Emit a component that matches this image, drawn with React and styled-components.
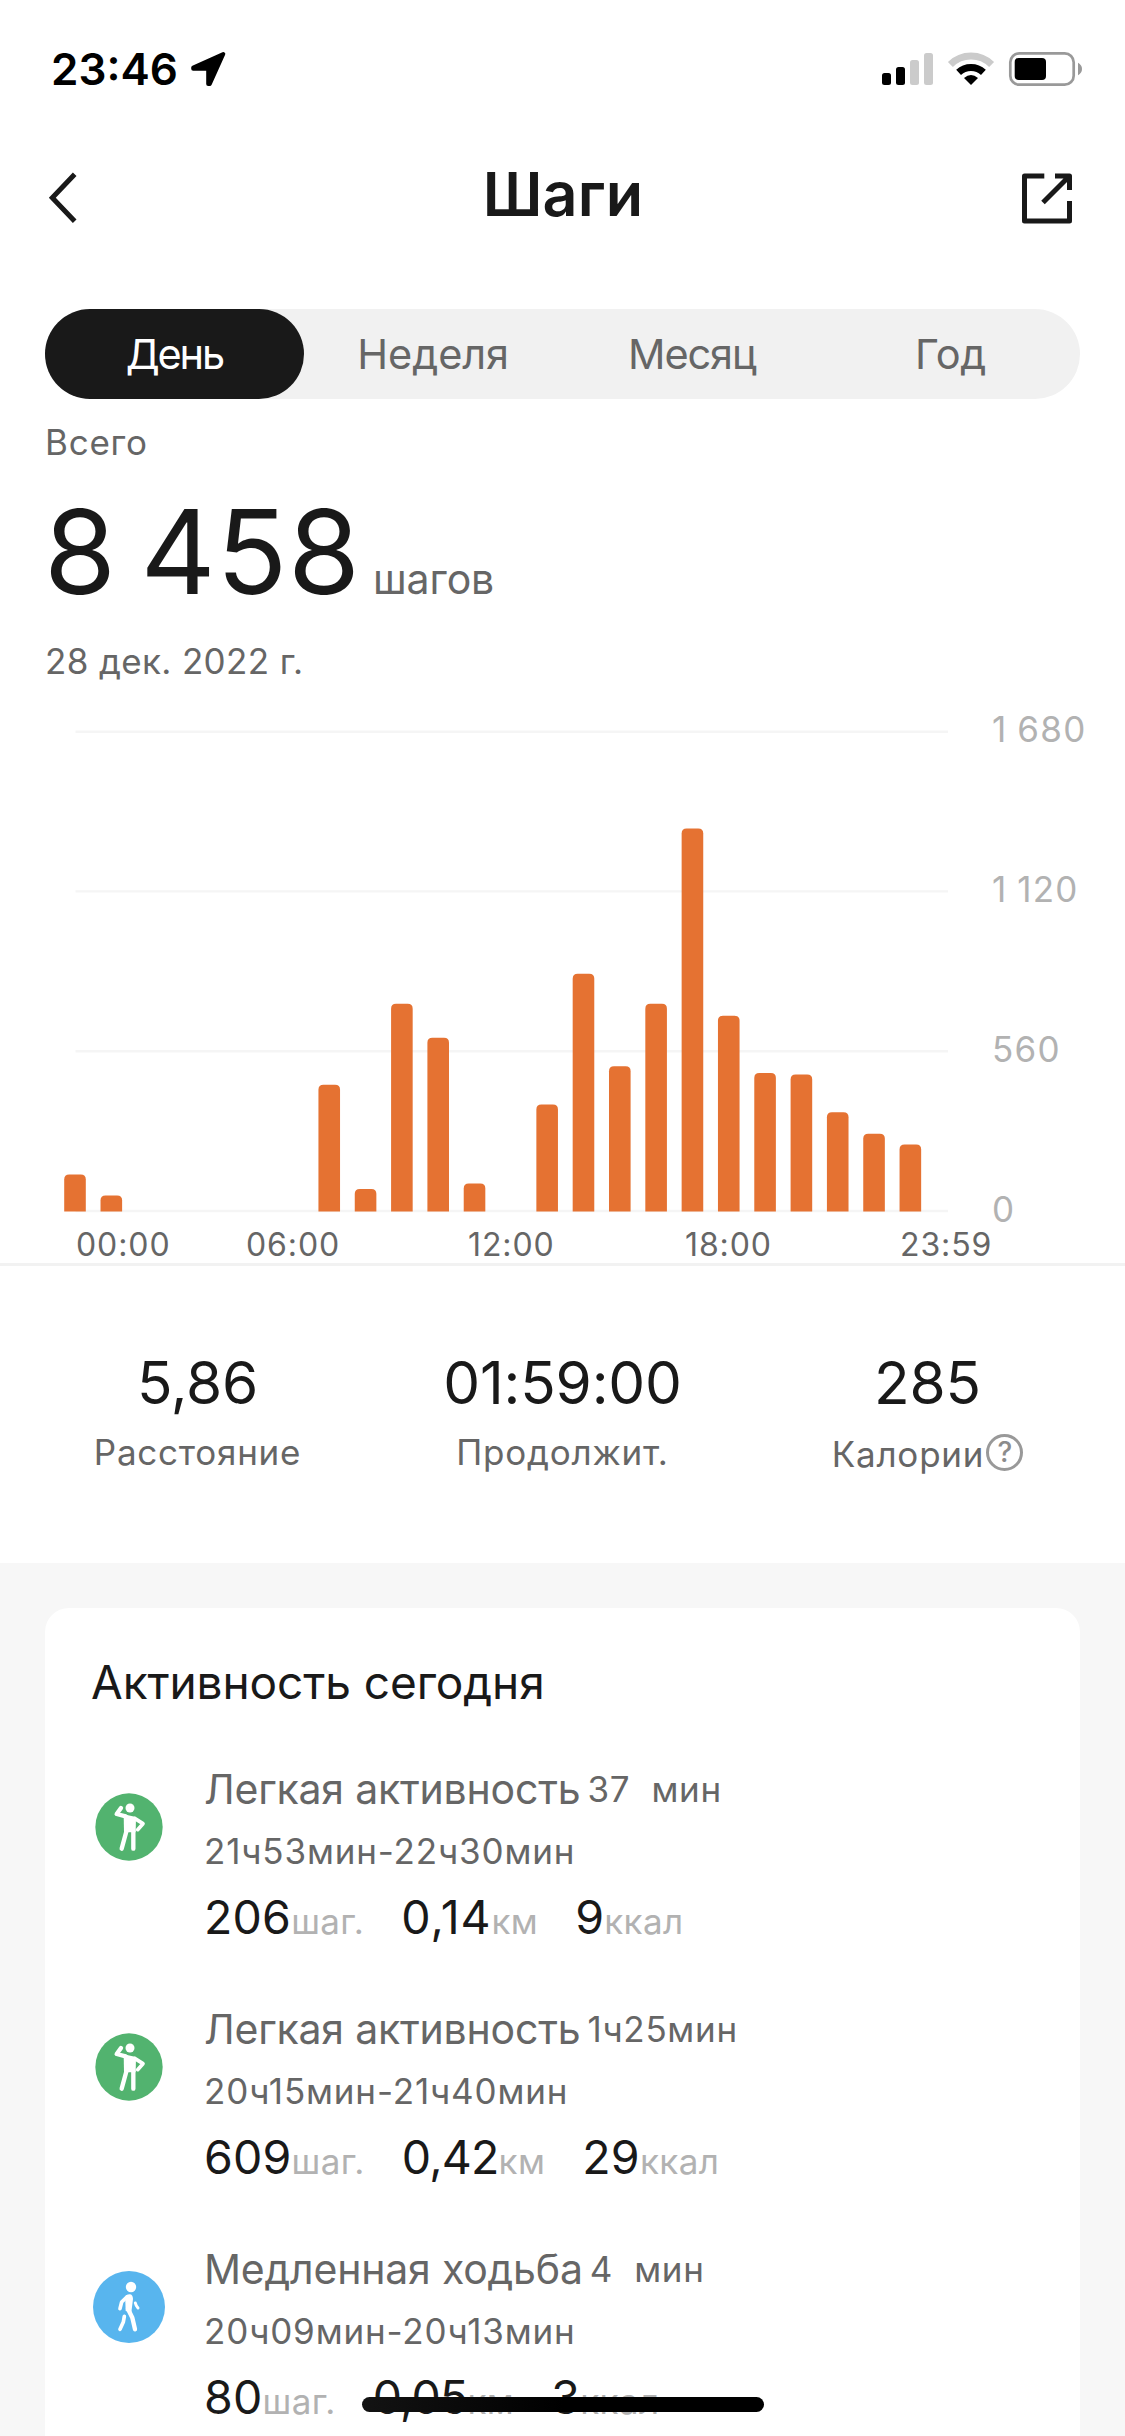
import React, {useState} from 'react';
import styled, {createGlobalStyle} from 'styled-components';

const palette = {
    ink: '#191919',
    grey: '#666666',
    light: '#b2b2b2',
    line: '#f2f2f2',
    grid: '#f5f5f5',
    pill: '#f1f1f1',
    page: '#f7f7f7',
    orange: '#e57232',
    green: '#52b36f',
    blue: '#58b5ee',
};

const GlobalStyle = createGlobalStyle`
    body {
        margin: 0;
        background: ${palette.page};
        font-family: Inter, "Liberation Sans", sans-serif;
        color: ${palette.ink};
    }
    * {
        box-sizing: border-box;
    }
`;

const Screen = styled.div`
    position: relative;
    display: flex;
    flex-direction: column;
    width: 1125px;
    height: 2436px;
    overflow: hidden;
    white-space: pre;
`;

const Panel = styled.section`
    background: #ffffff;
`;

const StatusBar = styled.div`
    display: flex;
    align-items: center;
    justify-content: space-between;
    height: 132px;
    padding: 6px 41px 0 51px;
    color: #000000;
`;

const Clock = styled.div`
    display: flex;
    align-items: center;
    gap: 12px;
    font-size: 44px;
    font-weight: 600;
    line-height: 54px;
`;

const NavBar = styled.header`
    display: flex;
    align-items: center;
    justify-content: space-between;
    height: 132px;
    padding: 0 51px 0 47px;
`;

const Title = styled.h1`
    margin: 0 0 8px 29px;
    font-size: 61px;
    font-weight: 600;
    line-height: 74px;
    letter-spacing: 0.1px;
`;

const IconButton = styled.button`
    display: flex;
    padding: 0;
    border: 0;
    background: none;
    color: ${palette.ink};
`;

const Tabs = styled.nav`
    display: grid;
    grid-template-columns: repeat(4, 1fr);
    height: 90px;
    margin: 45px 45px 0;
    border-radius: 45px;
    background: ${palette.pill};
`;

const Tab = styled.button`
    padding: 0;
    border: 0;
    border-radius: 45px;
    font: inherit;
    font-size: 41.5px;
    letter-spacing: ${({tracking}) => tracking || 0}px;
    background: ${({active}) => (active ? palette.ink : 'none')};
    color: ${({active}) => (active ? '#ffffff' : palette.grey)};
`;

const Summary = styled.div`
    padding: 20px 45px 0;
`;

const Caption = styled.div`
    font-size: 35px;
    line-height: 46px;
    letter-spacing: ${({tracking}) => tracking || 0.75}px;
    color: ${palette.grey};
`;

const Total = styled.div`
    display: flex;
    align-items: baseline;
    gap: 12px;
    height: 140px;
    margin: 17px 0 16px -1px;
    font-size: 116.5px;
    line-height: 140px;
    letter-spacing: 0.8px;
    word-spacing: -10px;
`;

const TotalUnit = styled.span`
    font-size: 41px;
    letter-spacing: -0.1px;
    color: ${palette.grey};
`;

const Chart = styled.div`
    display: flex;
    padding: 25px 0 0 60px;
`;

const Scale = styled.div`
    display: flex;
    flex-direction: column;
    justify-content: space-between;
    height: 520px;
    font-size: 35px;
    line-height: 40px;
    letter-spacing: 1.3px;
    word-spacing: -1.5px;
    color: ${palette.light};
`;

const Hours = styled.div`
    display: grid;
    grid-template-columns: 170px 222px 217px 215px auto;
    height: 34px;
    padding-left: 76px;
    font-size: 32px;
    line-height: 31px;
    letter-spacing: 0.9px;
    color: ${palette.grey};
`;

const Stats = styled.div`
    display: grid;
    grid-template-columns: repeat(3, 365px);
    justify-content: center;
    height: 300px;
    padding-top: 82px;
    border-top: 3px solid ${palette.line};
`;

const Stat = styled.div`
    display: flex;
    flex-direction: column;
    align-items: center;
    gap: 11px;
`;

const StatValue = styled.div`
    font-size: 58.5px;
    line-height: 70px;
    letter-spacing: -0.2px;
`;

const StatLabel = styled.div`
    display: flex;
    align-items: center;
    gap: 2px;
    padding-top: ${({hint}) => (hint ? 2 : 0)}px;
`;

const Help = styled.span`
    width: 37px;
    height: 37px;
    margin-bottom: 3px;
    border: 3px solid #999999;
    border-radius: 50%;
    font-size: 28px;
    font-weight: 500;
    line-height: 31px;
    text-align: center;
    color: #8c8c8c;
`;

const Feed = styled.section`
    flex: 1;
    padding: 45px 45px 0;
    background: ${palette.page};
`;

const Card = styled.div`
    height: 900px;
    padding: 44px 46px 0;
    border-radius: 24px;
    background: #ffffff;
`;

const CardTitle = styled.h2`
    margin: 0 0 52px;
    font-size: 46px;
    font-weight: 400;
    line-height: 60px;
    letter-spacing: -0.1px;
`;

const Activities = styled.div`
    display: flex;
    flex-direction: column;
    gap: 57px;
`;

const Activity = styled.div`
    display: flex;
    gap: 39px;
    height: 183px;
    padding-left: 2px;
`;

const Badge = styled.svg`
    flex: none;
    width: 72px;
    height: 72px;
    margin-top: 27px;
`;

const ActivityName = styled.div`
    display: flex;
    align-items: center;
    gap: 7px;
    height: 50px;
    margin-bottom: 14px;
    font-size: 41px;
    letter-spacing: -0.2px;
    color: ${palette.grey};
`;

const Metrics = styled.div`
    display: flex;
    gap: 37px;
    margin-top: 13px;
    line-height: 60px;
`;

const Metric = styled.div`
    font-size: 46.5px;
    letter-spacing: ${({tracking}) => tracking || 0.2}px;
`;

const Unit = styled.span`
    font-size: 35px;
    letter-spacing: 0.4px;
    color: ${palette.light};
`;

const HomeIndicator = styled.div`
    position: absolute;
    left: 362px;
    bottom: 24px;
    width: 402px;
    height: 15px;
    border-radius: 8px;
    background: linear-gradient(90deg, #131313, #000000 50%);
`;

const LocationArrow = () => (
    <svg width="36" height="36" viewBox="190 52 36 36" fill="currentColor" stroke="currentColor" strokeWidth="4" strokeLinejoin="round">
        <path d="M223.3 55 193.2 68.6V69.8H208.2V84.9H209.8Z"/>
    </svg>
);

const StatusIcons = () => (
    <svg width="204" height="38" viewBox="880 50 204 38">
        <rect x="882" y="73" width="9" height="12" rx="2.5"/>
        <rect x="896" y="67" width="9" height="18" rx="2.5"/>
        <rect x="910" y="60" width="9" height="25" rx="2.5" fill="#cbcbcb"/>
        <rect x="924" y="53" width="9" height="32" rx="2.5" fill="#cbcbcb"/>
        <g fill="none" strokeWidth="7">
            <path d="M950.4 64.4A29.2 29.2 0 0 1 991.6 64.4" stroke="#cbcbcb"/>
            <path d="M958.6 72.4A18 18 0 0 1 983.4 72.4" stroke="#000"/>
        </g>
        <path d="M971 85 964 78Q971 72 978 78Z"/>
        <rect x="1010.3" y="53.3" width="63.4" height="31.4" rx="9" fill="none" stroke="#999" strokeWidth="2.7"/>
        <rect x="1014.7" y="58" width="31.3" height="22" rx="4"/>
        <path d="M1078 62.8Q1082 65 1082 69T1078 75.2Z" fill="#999"/>
    </svg>
);

const BackIcon = () => (
    <svg width="30" height="54" viewBox="47 171 30 54" fill="none" stroke="currentColor" strokeWidth="5">
        <path d="M74.7 174.3 52.3 197.8 74.7 221.3"/>
    </svg>
);

const ShareIcon = () => (
    <svg width="54" height="54" viewBox="1020 171 54 54" fill="none" stroke="currentColor" strokeWidth="5" strokeLinejoin="round">
        <path d="M1044.3 176H1024.5V221H1069.5V201M1055 176H1069.5V190M1043 202.5 1069 176.5"/>
    </svg>
);

const StandingBadge = () => (
    <Badge viewBox="0 0 216 216">
        <circle cx="108" cy="108" r="101" fill={palette.green}/>
        <circle cx="111" cy="51" r="13.5" fill="#fff"/>
        <path d="M92 70 129 78 128 124 93 124Z" fill="#fff"/>
        <g fill="none" stroke="#fff" strokeLinecap="round" strokeLinejoin="round">
            <path d="M84 51 71 69 98 76" strokeWidth="13"/>
            <path d="M125 82 150 98 134 116" strokeWidth="11"/>
            <path d="M101 118 86 173M121 118V173" strokeWidth="13"/>
        </g>
    </Badge>
);

const WalkingBadge = () => (
    <Badge viewBox="0 0 216 216">
        <circle cx="108" cy="108" r="108" fill={palette.blue}/>
        <circle cx="114" cy="48" r="15.5" fill="#fff"/>
        <path d="M98 74Q119 62 120 84L115 124 98 120 97 92Z" fill="#fff"/>
        <g fill="none" stroke="#fff" strokeLinecap="round" strokeLinejoin="round">
            <path d="M103 77 86 93 81 113" strokeWidth="11"/>
            <path d="M127 96Q129 105 135 111" strokeWidth="9"/>
            <path d="M105 114 118 140 126 175" strokeWidth="13"/>
            <path d="M94 136 91 153 81 175" strokeWidth="11"/>
        </g>
    </Badge>
);

const tabs = [
    {label: 'День', tracking: -2.2},
    {label: 'Неделя', tracking: -0.1},
    {label: 'Месяц', tracking: -1.1},
    {label: 'Год', tracking: -0.2},
];

// steps per hour slot, starting at midnight
const steps = [
    130, 56, 0, 0, 0, 0, 0, 444, 79, 728, 609, 98,
    0, 375, 833, 509, 728, 1342, 686, 485, 480, 348, 272, 235,
];
const maxSteps = 1680;
const plotHeight = 479.5;
const baseLine = 502.5;

const activities = [
    {
        icon: StandingBadge,
        name: 'Легкая активность',
        duration: '37  мин',
        time: '21ч53мин-22ч30мин',
        metrics: [{value: '206', unit: 'шаг.'}, {value: '0,14', unit: 'км', tracking: 0.9}, {value: '9', unit: 'ккал'}],
    },
    {
        icon: StandingBadge,
        name: 'Легкая активность',
        duration: '1ч25мин',
        time: '20ч15мин-21ч40мин',
        metrics: [{value: '609', unit: 'шаг.'}, {value: '0,42', unit: 'км', tracking: -0.8}, {value: '29', unit: 'ккал'}],
    },
    {
        icon: WalkingBadge,
        name: 'Медленная ходьба',
        duration: '4  мин',
        time: '20ч09мин-20ч13мин',
        metrics: [{value: '80', unit: 'шаг.'}, {value: '0,05', unit: 'км', tracking: -0.8}, {value: '3', unit: 'ккал'}],
    },
];

const barPath = (value, i) => {
    const left = 4.2 + i * 36.32;
    const right = left + 21.6;
    const top = baseLine - value / maxSteps * plotHeight;
    return `M${left} ${baseLine}V${top + 5}q0-5 5-5H${right - 5}q5 0 5 5V${baseLine}Z`;
};

const StepsChart = () => (
    <Chart>
        <svg width="932" height="520" viewBox="0 0 932 520">
            {[22.8, 182.4, 342.2, 502].map((y) => (
                <path key={y} d={`M15.5 ${y}H888`} stroke={palette.grid} strokeWidth="2.4"/>
            ))}
            {steps.map((value, i) => value > 0 && <path key={i} d={barPath(value, i)} fill={palette.orange}/>)}
        </svg>
        <Scale>
            {['1 680', '1 120', '560', '0'].map((mark) => <span key={mark}>{mark}</span>)}
        </Scale>
    </Chart>
);

const App = () => {
    const [current, setCurrent] = useState('День');
    return (
        <Screen>
            <GlobalStyle/>
            <Panel>
                <StatusBar>
                    <Clock>23:46<LocationArrow/></Clock>
                    <StatusIcons/>
                </StatusBar>
                <NavBar>
                    <IconButton><BackIcon/></IconButton>
                    <Title>Шаги</Title>
                    <IconButton><ShareIcon/></IconButton>
                </NavBar>
                <Tabs>
                    {tabs.map(({label, tracking}) => (
                        <Tab key={label} tracking={tracking} active={label === current} onClick={() => setCurrent(label)}>
                            {label}
                        </Tab>
                    ))}
                </Tabs>
                <Summary>
                    <Caption>Всего</Caption>
                    <Total>8 458<TotalUnit>шагов</TotalUnit></Total>
                    <Caption tracking={0.35}>28 дек. 2022 г.</Caption>
                </Summary>
                <StepsChart/>
                <Hours>
                    {['00:00', '06:00', '12:00', '18:00', '23:59'].map((hour) => <span key={hour}>{hour}</span>)}
                </Hours>
                <Stats>
                    <Stat>
                        <StatValue>5,86</StatValue>
                        <Caption>Расстояние</Caption>
                    </Stat>
                    <Stat>
                        <StatValue>01:59:00</StatValue>
                        <Caption>Продолжит.</Caption>
                    </Stat>
                    <Stat>
                        <StatValue>285</StatValue>
                        <StatLabel hint>
                            <Caption tracking={0.8}>Калории</Caption>
                            <Help>?</Help>
                        </StatLabel>
                    </Stat>
                </Stats>
            </Panel>
            <Feed>
                <Card>
                    <CardTitle>Активность сегодня</CardTitle>
                    <Activities>
                        {activities.map(({icon: Icon, name, duration, time, metrics}) => (
                            <Activity key={time}>
                                <Icon/>
                                <div>
                                    <ActivityName>{name}<Caption tracking={0.7}>{duration}</Caption></ActivityName>
                                    <Caption tracking={0.85}>{time}</Caption>
                                    <Metrics>
                                        {metrics.map(({value, unit, tracking}) => (
                                            <Metric key={unit} tracking={tracking}>{value}<Unit>{unit}</Unit></Metric>
                                        ))}
                                    </Metrics>
                                </div>
                            </Activity>
                        ))}
                    </Activities>
                </Card>
            </Feed>
            <HomeIndicator/>
        </Screen>
    );
};

export default App;
